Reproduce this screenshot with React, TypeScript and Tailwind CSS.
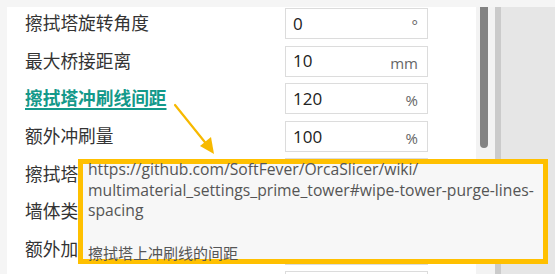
import React from 'react';

type Row = { label: string; value: string; unit: string; active?: boolean };

// rows 5-8 sit under the tooltip; only their visible start is written
const rows: Row[] = [
  { label: '擦拭塔旋转角度', value: '0', unit: '°' },
  { label: '最大桥接距离', value: '10', unit: 'mm' },
  { label: '擦拭塔冲刷线间距', value: '120', unit: '%', active: true },
  { label: '额外冲刷量', value: '100', unit: '%' },
  { label: '擦拭塔', value: '', unit: '' },
  { label: '墙体类', value: '', unit: '' },
  { label: '额外加', value: '', unit: '' },
  { label: '', value: '', unit: '' },
];

function SettingRow({ row }: { row: Row }) {
  return (
    <div className="flex h-[37.6px] shrink-0 items-start">
      <div className="flex h-[31px] w-[260px] shrink-0 items-center">
        {row.active ? (
          <span className="font-bold text-[#13998a] underline decoration-[1.5px] underline-offset-[3px]">{row.label}</span>
        ) : (
          <span className="text-[#333333]">{row.label}</span>
        )}
      </div>
      <div className="flex h-[31px] w-[143px] shrink-0 items-center justify-between border border-[#dcdcdc] bg-white pl-[7px] pr-[9px]">
        <span className="text-[17px] text-[#222222]">{row.value}</span>
        <span className="pt-[4px] text-[15px] text-[#666666]">{row.unit}</span>
      </div>
    </div>
  );
}

export default function App() {
  return (
    <div
      className="relative flex h-[274px] w-[555px] overflow-hidden bg-[#f5f5f5] pl-[7px] pt-[7px]"
      style={{ fontFamily: '"Open Sans", "Noto Sans CJK SC", sans-serif' }}
    >
      <div className="flex w-[469px] shrink-0 flex-col bg-white pl-[18px] pt-[1px] text-[17.7px]">
        {rows.map((r, i) => (
          <SettingRow key={i} row={r} />
        ))}
      </div>

      <div className="w-[19px] shrink-0 bg-[#f3f3f3] pl-[4px]">
        <div className="h-[141px] w-[8px] rounded-b-[4px] bg-[#838383]" />
      </div>
      <div className="w-[6px] shrink-0 bg-[#cbcbcb]" />
      <div className="flex-1 bg-[#e6e6e6]" />

      <svg className="pointer-events-none absolute left-[168px] top-[100px]" width="56" height="60" viewBox="0 0 56 60">
        <line x1="7" y1="5" x2="40" y2="46" stroke="#f7b900" strokeWidth="2.2" strokeLinecap="round" />
        <polygon points="46,54 32,46 43,37" fill="#f7b900" />
      </svg>

      <div className="absolute left-[78px] top-[159px] h-[105px] w-[470px] border-[5px] border-[#ffc000] bg-[#f7f7f7] pl-[5px] text-[#555555]">
        <div className="-mt-[5px] text-[15.7px] leading-[20.5px]">
          <div>https://github.com/SoftFever/OrcaSlicer/wiki/</div>
          <div>multimaterial_settings_prime_tower#wipe-tower-purge-lines-</div>
          <div>spacing</div>
        </div>
        <div className="mt-[22px] text-[15px] leading-[20px]">擦拭塔上冲刷线的间距</div>
      </div>
    </div>
  );
}
